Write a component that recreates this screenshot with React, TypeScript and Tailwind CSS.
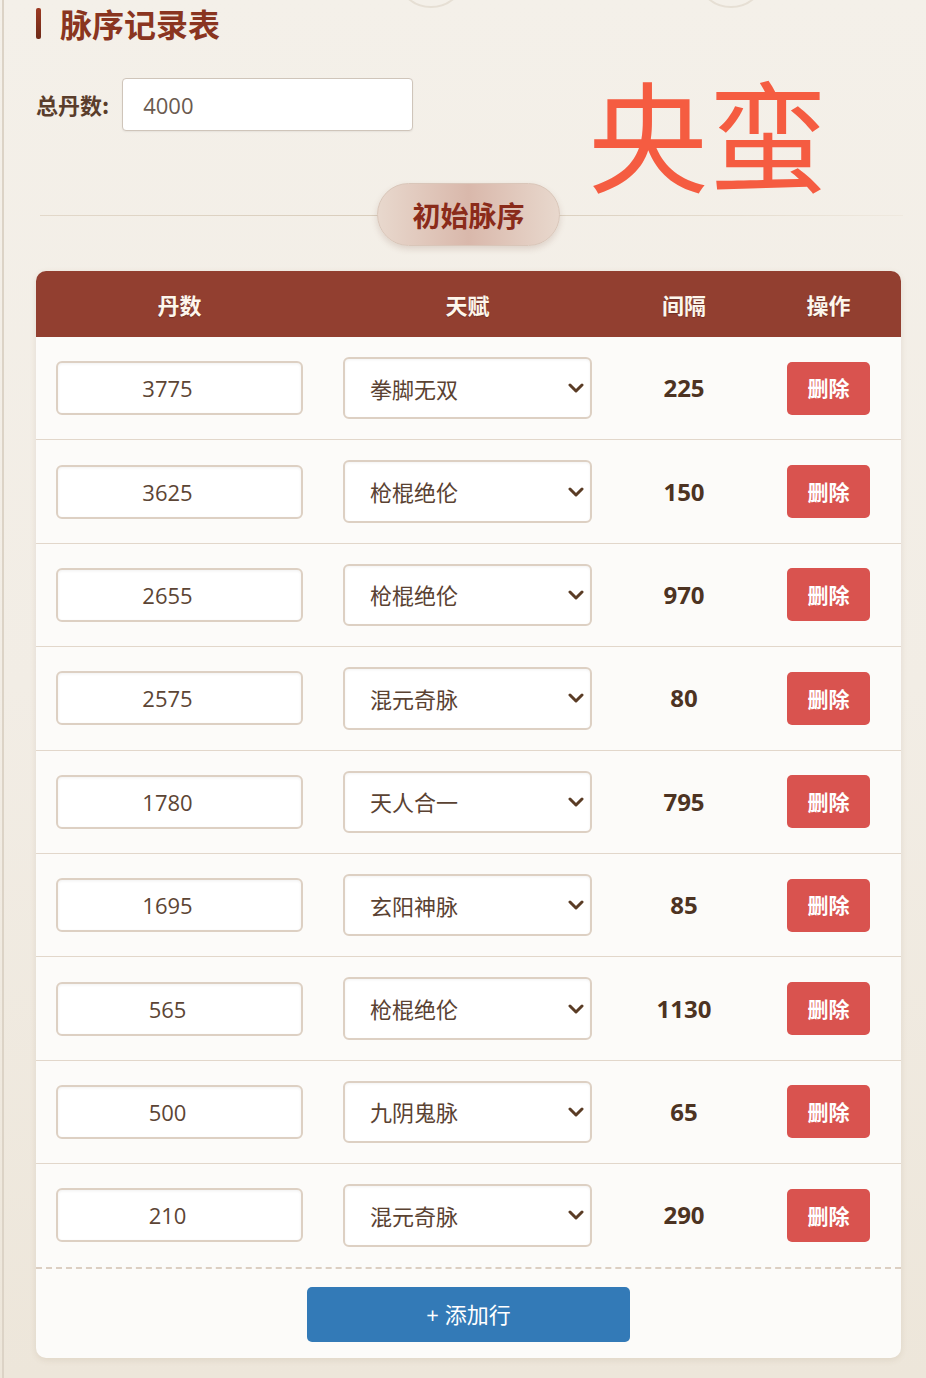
import React from "react";

type Row = { dan: number; talent: string; gap: number };

const rows: Row[] = [
  { dan: 3775, talent: "拳脚无双", gap: 225 },
  { dan: 3625, talent: "枪棍绝伦", gap: 150 },
  { dan: 2655, talent: "枪棍绝伦", gap: 970 },
  { dan: 2575, talent: "混元奇脉", gap: 80 },
  { dan: 1780, talent: "天人合一", gap: 795 },
  { dan: 1695, talent: "玄阳神脉", gap: 85 },
  { dan: 565, talent: "枪棍绝伦", gap: 1130 },
  { dan: 500, talent: "九阴鬼脉", gap: 65 },
  { dan: 210, talent: "混元奇脉", gap: 290 },
];

const talents = ["拳脚无双", "枪棍绝伦", "混元奇脉", "天人合一", "玄阳神脉", "九阴鬼脉"];

function Chevron() {
  return (
    <svg
      className="pointer-events-none absolute right-[8px] top-1/2 -translate-y-1/2"
      width="16"
      height="10"
      viewBox="0 0 16 10"
      fill="none"
    >
      <path d="M2 2l6 6 6-6" stroke="#5a3c25" strokeWidth="3" strokeLinecap="round" strokeLinejoin="round" />
    </svg>
  );
}

function TableRow({ row, last }: { row: Row; last: boolean }) {
  return (
    <div
      className={`grid grid-cols-[287px_289px_144px_145px] items-center py-5 ${
        last ? "border-b-2 border-dashed border-[#dccfc2]" : "border-b border-[#e2d7cb]"
      }`}
    >
      <div className="px-5">
        <input
          readOnly
          value={row.dan}
          className="h-[54px] w-full rounded-[6px] border-2 border-[#ddd0c3] bg-white pr-[24px] text-center text-[22px] text-[#5c4535] shadow-[inset_0_1px_3px_rgba(0,0,0,0.06)] outline-none [font-family:'Open_Sans','Noto_Sans_CJK_SC',sans-serif]"
        />
      </div>
      <div className="px-5">
        <div className="relative">
          <select
            defaultValue={row.talent}
            className="h-[62.4px] w-full appearance-none rounded-[6px] border-2 border-[#ddd0c3] bg-white pl-[25px] text-[22px] text-[#5a4232] shadow-[inset_0_1px_3px_rgba(0,0,0,0.05)] outline-none [font-family:'Noto_Sans_CJK_SC',sans-serif]"
          >
            {talents.map((t) => (
              <option key={t} value={t}>
                {t}
              </option>
            ))}
          </select>
          <Chevron />
        </div>
      </div>
      <div className="text-center text-[24px] font-bold text-[#4d3322] [font-family:'Open_Sans',sans-serif]">
        {row.gap}
      </div>
      <div className="flex justify-center">
        <button className="h-[53px] w-[83px] rounded-[5px] bg-[#d9534f] text-[21px] font-bold text-white [font-family:'Noto_Sans_CJK_SC',sans-serif]">
          删除
        </button>
      </div>
    </div>
  );
}

export default function App() {
  return (
    <div className="relative min-h-[1378px] overflow-hidden bg-gradient-to-b from-[#f4f0e9] via-[#f2ede5] to-[#ede6da] [font-family:'Noto_Sans_CJK_SC',sans-serif]">
      {/* faint ornamental rings at the top edge */}
      <div className="pointer-events-none absolute left-[395px] top-[-64px] h-[72px] w-[72px] rounded-full border-2 border-[#e6dfd4]" />
      <div className="pointer-events-none absolute left-[695px] top-[-64px] h-[72px] w-[72px] rounded-full border-2 border-[#e6dfd4]" />

      <div className="ml-[2px] min-h-[1378px] border-l-2 border-[#dcd3c6] pl-[32px] pr-[25px]">
        {/* section title */}
        <div className="flex items-center gap-[19px] pt-[7px]">
          <div className="h-[31px] w-[5px] rounded-[2px] bg-gradient-to-b from-[#9c3a22] to-[#6e2a18]" />
          <h2 className="text-[32px] font-bold leading-[32px] text-[#8a3520]">脉序记录表</h2>
        </div>

        {/* total */}
        <div className="mt-[39px] flex items-center gap-[13px]">
          <label className="text-[22px] font-bold text-[#5a3d2b]">总丹数:</label>
          <input
            readOnly
            value="4000"
            className="h-[53px] w-[291px] rounded-[4px] border border-[#cfc5ba] bg-white pl-[20px] text-[22px] text-[#6a5a50] shadow-[0_1px_2px_rgba(0,0,0,0.06)] outline-none [font-family:'Open_Sans',sans-serif]"
          />
        </div>

        {/* divider with pill */}
        <div className="relative mt-[52px] flex h-[63px] items-center justify-center">
          <div className="absolute left-[4px] right-[-2px] top-1/2 h-px bg-gradient-to-r from-[#e2d8ca] via-[#d6cab8] to-[#efe9df]" />
          <div className="relative flex h-[63px] w-[183px] items-center justify-center rounded-full border border-[#d9c6b9] bg-gradient-to-r from-[#e8d8cd] via-[#d9b8ab] to-[#e8d8cd] shadow-[0_3px_6px_rgba(120,80,60,0.18)]">
            <span className="text-[28px] font-bold text-[#8a2b1a]">初始脉序</span>
          </div>
        </div>

        {/* table */}
        <div className="mt-[25px] overflow-hidden rounded-[10px] bg-[#fcfbf9] shadow-[0_2px_6px_rgba(120,90,60,0.12)]">
          <div className="grid h-[66px] grid-cols-[287px_289px_144px_145px] items-center bg-[#923f30] text-center text-[22px] font-bold text-[#fdf6ec] [text-shadow:0_1px_1px_rgba(0,0,0,0.25)]">
            <div>丹数</div>
            <div>天赋</div>
            <div>间隔</div>
            <div>操作</div>
          </div>
          {rows.map((r, i) => (
            <TableRow key={i} row={r} last={i === rows.length - 1} />
          ))}
          <div className="flex justify-center pb-[16px] pt-[18px]">
            <button className="h-[55px] w-[323px] rounded-[5px] bg-[#337ab7] text-[22px] text-white">
              <span className="mr-[6px] [font-family:'Open_Sans',sans-serif]">+</span>添加行
            </button>
          </div>
        </div>
      </div>

      {/* stamp */}
      <div className="pointer-events-none absolute left-[588px] top-[72px] text-[120px] leading-[120px] text-[#f55c41] [font-family:'Noto_Sans_CJK_SC',sans-serif]">
        央蛮
      </div>
    </div>
  );
}
